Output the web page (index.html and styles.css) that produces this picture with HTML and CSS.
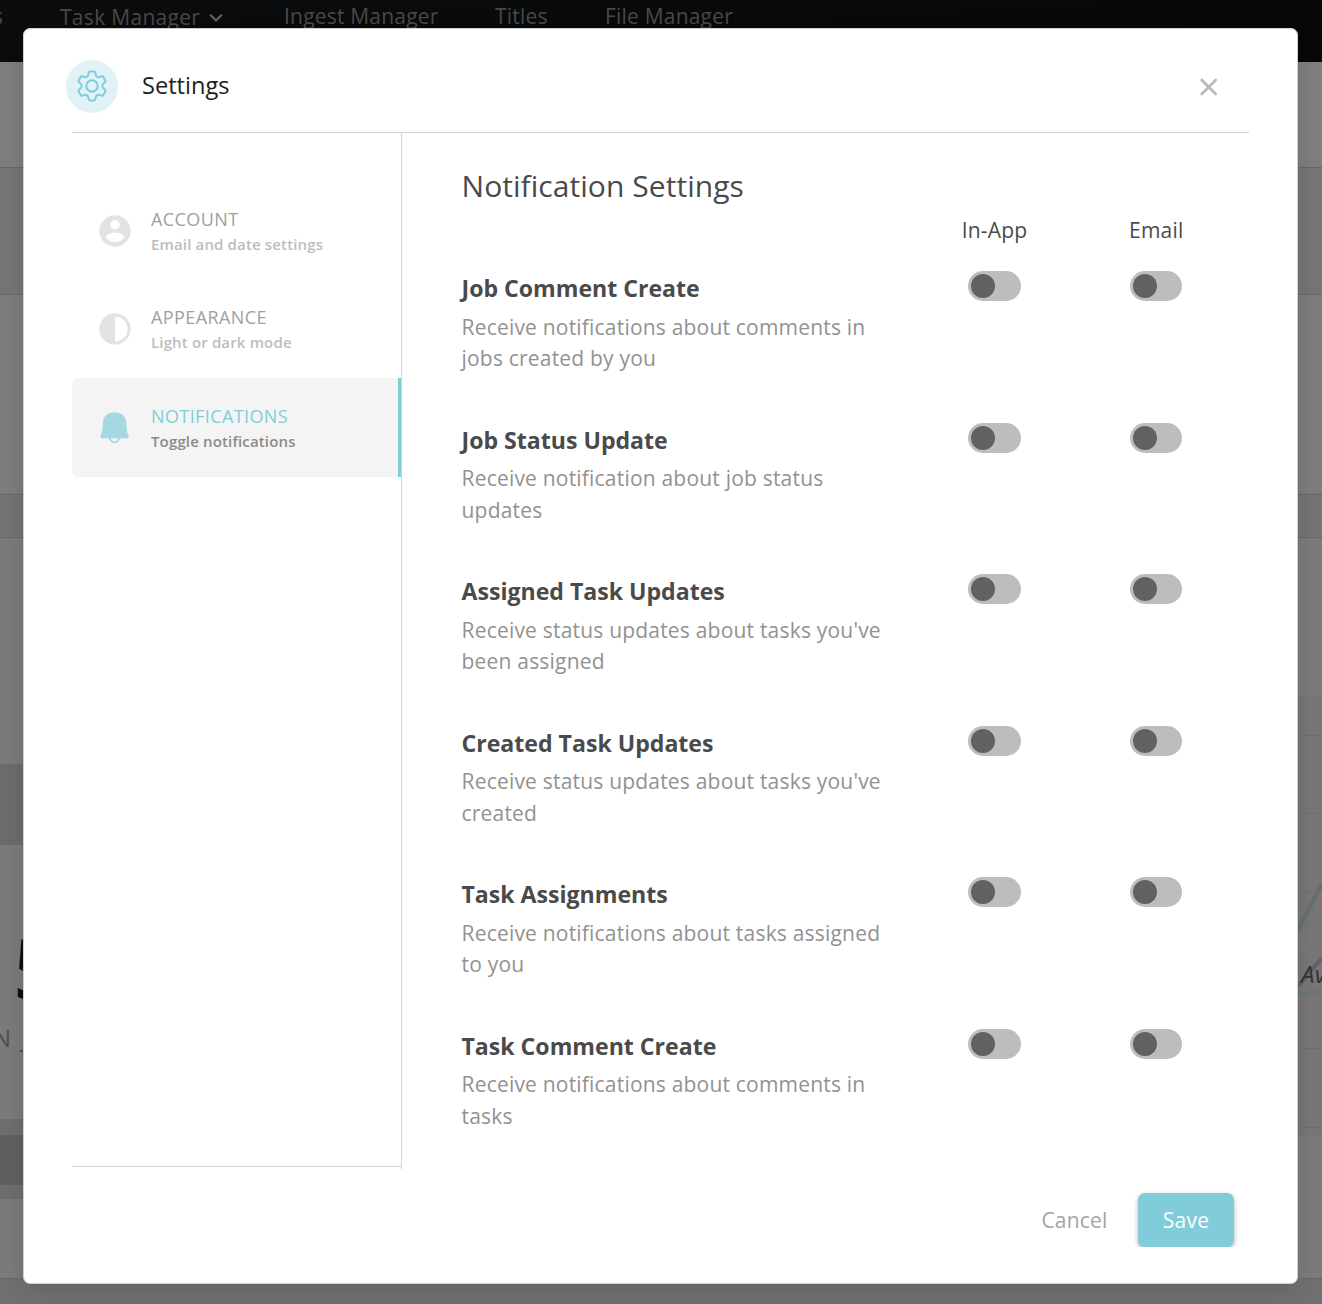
FILE: index.html
```html
<!DOCTYPE html>
<html lang="en">
<head>
<meta charset="utf-8">
<title>Settings</title>
<link rel="stylesheet" href="styles.css">
</head>
<body>
<div class="page">
  <nav class="topbar">
    <span class="topbar-cut">s</span>
    <span class="topbar-item">Task Manager <svg width="16" height="10" viewBox="0 0 16 10"><path d="M2 1.5 8 7.5 14 1.5" fill="none" stroke="currentColor" stroke-width="2"/></svg></span>
    <span>Ingest Manager</span>
    <span>Titles</span>
    <span>File Manager</span>
  </nav>
  <div class="band band-toolbar"></div>
  <div class="band band-filters"></div>
  <div class="band band-card"></div>
  <div class="band band-gap"></div>
  <div class="content">
    <div class="stats">
      <div class="stat-head"></div>
      <div class="stat-body"><span class="stat-number">5</span><span class="stat-label">N JOBS</span></div>
      <div class="stat-line"></div>
      <div class="stat-dark"></div>
      <div class="stat-line stat-line-end"></div>
    </div>
    <div class="map">
      <svg width="24" height="441" viewBox="0 0 24 441">
        <g fill="none">
          <path d="M0 39.500H24M0 117.500H24M0 195.500H24M0 352.500H24M0 431.500H24" stroke="#707070"/>
          <path d="M-2 237 24 188" stroke="#66706f" stroke-width="4"/>
          <path d="M-2 240 20 269" stroke="#707c7e" stroke-width="3"/>
          <path d="M0 290 24 262" stroke="#665f70" stroke-width="4"/>
          <path d="M0 299 24 295" stroke="#6b786d" stroke-width="4"/>
        </g>
        <text x="3" y="286.500" class="map-label">Av</text>
      </svg>
    </div>
  </div>
</div>

<div class="modal" role="dialog">
  <header class="modal-header">
    <span class="badge">
      <svg width="34" height="34" viewBox="0 0 34 34" fill="none" stroke="#7fcdda" stroke-width="2" stroke-linejoin="round">
        <path d="M13.200 6.100 13.700 3.600Q13.900 2.600 14.900 2.600H19.100Q20.100 2.600 20.300 3.600L20.800 6.100Q21.100 7.300 22.200 7.900 23.300 8.500 24.500 8.100L26.900 7.300Q27.900 7 28.400 7.900L30.400 11.400Q30.900 12.300 30.200 13L28.300 14.700Q27.400 15.600 27.400 17 27.400 18.400 28.300 19.300L30.200 21Q30.900 21.700 30.400 22.600L28.400 26.100Q27.900 27 26.900 26.700L24.500 25.900Q23.300 25.500 22.200 26.100 21.100 26.700 20.800 27.900L20.300 30.400Q20.100 31.400 19.100 31.400H14.900Q13.900 31.400 13.700 30.400L13.200 27.900Q12.900 26.700 11.800 26.100 10.700 25.500 9.500 25.900L7.100 26.700Q6.100 27 5.600 26.100L3.600 22.600Q3.100 21.700 3.800 21L5.700 19.300Q6.600 18.400 6.600 17 6.600 15.600 5.700 14.700L3.800 13Q3.100 12.300 3.600 11.400L5.600 7.900Q6.100 7 7.100 7.300L9.500 8.100Q10.700 8.500 11.800 7.900 12.900 7.300 13.200 6.100Z"/>
        <circle cx="17" cy="17" r="5.700"/>
      </svg>
    </span>
    <h1>Settings</h1>
    <svg class="close" width="18" height="18" viewBox="0 0 18 18"><path d="M1.700 2 15.700 16M15.700 2 1.700 16" stroke="#b9b9b9" stroke-width="2.600" stroke-linecap="round"/></svg>
  </header>
  <div class="modal-body">
    <aside class="sidebar">
      <div class="nav-item">
        <svg width="32" height="32" viewBox="0 0 32 32"><path fill="#e2e2e2" fill-rule="evenodd" d="M16 .3a15.700 15.700 0 1 0 0 31.400A15.700 15.700 0 0 0 16 .3Zm0 4.700a4.700 4.700 0 1 1 0 9.400A4.700 4.700 0 0 1 16 5Zm0 22.300c-3.900 0-7.300-2-9.300-5 0-3.100 6.200-4.900 9.300-4.900s9.300 1.800 9.300 4.900c-2 3-5.400 5-9.300 5Z"/></svg>
        <div><div class="nav-title">ACCOUNT</div><div class="nav-sub">Email and date settings</div></div>
      </div>
      <div class="nav-item">
        <svg width="32" height="32" viewBox="0 0 32 32"><circle cx="16" cy="16" r="14.100" fill="none" stroke="#e2e2e2" stroke-width="3.100"/><path d="M16 2v28a14 14 0 0 1 0-28Z" fill="#e2e2e2"/></svg>
        <div><div class="nav-title">APPEARANCE</div><div class="nav-sub">Light or dark mode</div></div>
      </div>
      <div class="nav-item active">
        <svg width="32" height="32" viewBox="0.400 0.400 32 32"><path fill="#a4d8e2" d="M16 .7C9.500.7 4.700 4.800 4.300 10.500L3.600 19.500C3.400 21.700 1.900 23.300 1.900 25.300Q1.900 26.700 3.300 26.700H10.300Q11.700 31.500 16 31.500T21.700 26.700H28.700Q30.100 26.700 30.100 25.300C30.100 23.300 28.600 21.700 28.400 19.500L27.700 10.500C27.300 4.800 22.500.7 16 .7Z"/><path d="M12.200 26.700H19.800Q19 29.600 16 29.600T12.200 26.700Z" fill="#f4f4f4"/></svg>
        <div><div class="nav-title">NOTIFICATIONS</div><div class="nav-sub">Toggle notifications</div></div>
      </div>
    </aside>
    <main class="panel">
      <h2>Notification Settings</h2>
      <div class="cols"><span></span><span>In-App</span><span>Email</span></div>
      <div class="row"><div class="info"><h3>Job Comment Create</h3><p>Receive notifications about comments in jobs created by you</p></div><i class="toggle"></i><i class="toggle"></i></div>
      <div class="row"><div class="info"><h3>Job Status Update</h3><p>Receive notification about job status updates</p></div><i class="toggle"></i><i class="toggle"></i></div>
      <div class="row"><div class="info"><h3>Assigned Task Updates</h3><p>Receive status updates about tasks you've been assigned</p></div><i class="toggle"></i><i class="toggle"></i></div>
      <div class="row"><div class="info"><h3>Created Task Updates</h3><p>Receive status updates about tasks you've created</p></div><i class="toggle"></i><i class="toggle"></i></div>
      <div class="row"><div class="info"><h3>Task Assignments</h3><p>Receive notifications about tasks assigned to you</p></div><i class="toggle"></i><i class="toggle"></i></div>
      <div class="row"><div class="info"><h3>Task Comment Create</h3><p>Receive notifications about comments in tasks</p></div><i class="toggle"></i><i class="toggle"></i></div>
    </main>
  </div>
  <footer class="modal-footer">
    <button class="btn cancel">Cancel</button>
    <div class="save-wrap"><button class="btn save">Save</button></div>
  </footer>
</div>
</body>
</html>
```
FILE: styles.css
```css
* { box-sizing: border-box; }
body {
  margin: 0;
  width: 1322px;
  height: 1304px;
  overflow: hidden;
  position: relative;
  font-family: "Open Sans", sans-serif;
  font-size: 21px;
  letter-spacing: 0.2px;
  background: #707070;
}
h1, h2, h3, p { margin: 0; font-weight: 400; }

/* dimmed page */
.page { height: 1304px; display: flex; flex-direction: column; }
.topbar {
  height: 62px;
  flex: none;
  display: flex;
  align-items: flex-start;
  background: linear-gradient(90deg, #0c0c0e, #060707);
  color: #494949;
  line-height: 32px;
  white-space: nowrap;
}
.topbar-cut { width: 60px; margin-left: -7px; margin-right: 7px; }
.topbar-item { width: 224px; line-height: 34px; letter-spacing: 0.3px; }
.topbar-item svg { margin: 0 0 2px 2px; color: #646464; }
.topbar > span:nth-child(3) { width: 211px; }
.topbar > span:nth-child(4) { width: 110px; }
.band { flex: none; border-bottom: 1px solid #686868; }
.band-toolbar { height: 106px; background: #7e7e7e; }
.band-filters { height: 127px; background: #757575; }
.band-card { height: 200px; background: #7d7d7d; }
.band-gap { height: 43px; background: #747474; }
.content {
  height: 741px;
  flex: none;
  display: flex;
  justify-content: space-between;
  background: #7b7b7b;
  border-bottom: 1px solid #686868;
}
.stats { width: 60px; padding-top: 226px; display: flex; flex-direction: column; }
.stat-head { height: 81px; background: #6c6c6c; }
.stat-body { height: 274px; padding-top: 67px; display: flex; flex-direction: column; overflow: hidden; }
.stat-number { font-size: 84px; line-height: 110px; margin-left: 13px; font-weight: 600; color: #0f0f0f; }
.stat-label { font-size: 24px; line-height: 32px; margin: 0 0 0 -7px; color: #505050; white-space: nowrap; word-spacing: 4px; }
.stat-line { height: 16px; background: #6e6e6e; }
.stat-dark { height: 50px; background: #606060; }
.stat-line-end { height: 14px; }
.map { width: 24px; padding-top: 158px; }
.map svg { display: block; background: #777; }
.map-label { font-size: 24px; font-style: italic; fill: #333336; }

/* dialog */
.modal {
  position: absolute;
  left: 23px;
  top: 28px;
  width: 1275px;
  height: 1256px;
  padding: 0 48px;
  display: flex;
  flex-direction: column;
  background: #fff;
  border: 1px solid #d0d0d0;
  border-radius: 7px;
  box-shadow: 0 6px 24px rgba(0, 0, 0, 0.12);
}
.modal-header {
  height: 104px;
  flex: none;
  display: flex;
  align-items: center;
  padding-top: 11px;
  border-bottom: 1px solid #d4d4d4;
}
.badge {
  width: 52px;
  height: 53px;
  margin-left: -6px;
  display: flex;
  align-items: center;
  justify-content: center;
  border-radius: 50%;
  background: #e0f2f6;
}
.modal-header h1 { margin: 0 0 2px 24px; font-size: 23.600px; letter-spacing: 0; color: #212121; }
.close { margin: 1px 31px 0 auto; }
.modal-body { height: 1036px; flex: none; display: flex; }
.sidebar {
  width: 330px;
  height: 1036px;
  flex: none;
  padding-top: 48px;
  border-right: 1px solid #d4d4d4;
  background: linear-gradient(#d4d4d4, #d4d4d4) 0 1033px / 100% 1px no-repeat;
}
.nav-item { height: 98.500px; display: flex; align-items: center; padding: 1px 0 0 27px; gap: 20px; }
.nav-item > div { padding-top: 1px; }
.nav-title { font-size: 18px; line-height: 25px; letter-spacing: 0.4px; color: #a0a0a0; }
.nav-sub { font-size: 15px; line-height: 24px; font-weight: 600; letter-spacing: 0.150px; color: #bdbdbd; }
.active { background: #f4f4f4; border-radius: 7px 0 0 7px; border-right: 3px solid #7fcdda; }
.active .nav-title { color: #7fcdda; }
.active .nav-sub { color: #8b8b8b; }
.panel { flex: 1; padding: 31px 0 0 59.500px; color: #4a4a4a; }
.panel h2 { font-size: 30px; line-height: 44px; letter-spacing: 0.050px; }
.cols, .row { display: grid; grid-template-columns: 452px 162px 161.500px; }
.cols { height: 63px; line-height: 45px; text-align: center; }
.row { height: 151.550px; justify-items: center; }
.info { width: 452px; }
.info h3 { font-size: 23.100px; font-weight: 700; line-height: 35px; letter-spacing: 0; }
.info p { width: 440px; margin-top: 5.700px; line-height: 31.500px; color: #929292; }
.toggle {
  width: 53px;
  height: 30px;
  padding: 3px;
  border-radius: 15px;
  background: #bdbdbd;
}
.toggle:last-child { width: 52px; }
.toggle::before { content: ""; display: block; width: 24px; height: 24px; border-radius: 50%; background: #616161; }
.modal-footer { flex: 1; display: flex; justify-content: flex-end; padding: 14px 5px 0 0; }
.btn { height: 54px; padding: 0; border: 0; font: inherit; letter-spacing: inherit; }
.cancel { width: 67px; margin: 10px 20px 0 0; background: none; color: #a3a3a3; }
.save-wrap { height: 64px; padding: 10px; overflow: hidden; }
.save { width: 96px; display: block; border-radius: 7px; background: #80ccda; color: #fff; box-shadow: 0 2px 5px rgba(0, 0, 0, 0.3); }
```
